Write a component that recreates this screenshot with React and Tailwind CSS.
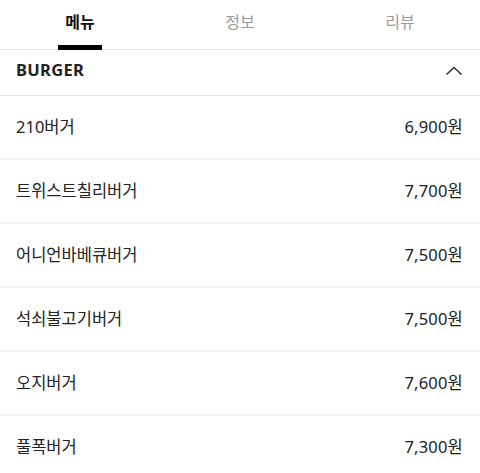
import React from 'react';

const tabs = ['메뉴', '정보', '리뷰'];

const menu = [
  { name: '210버거', price: '6,900원' },
  { name: '트위스트칠리버거', price: '7,700원' },
  { name: '어니언바베큐버거', price: '7,500원' },
  { name: '석쇠불고기버거', price: '7,500원' },
  { name: '오지버거', price: '7,600원' },
  { name: '풀폭버거', price: '7,300원' },
];

export default function App() {
  return (
    <div className="w-[480px] h-[473px] bg-white overflow-hidden font-['Noto_Sans','Noto_Sans_CJK_KR',sans-serif]">
      {/* tabs */}
      <div className="grid grid-cols-3 h-[50px] border-b border-[#e6e6e6]">
        {tabs.map((t, i) => (
          <div key={t} className="relative flex items-center justify-center pb-[6px]">
            <span className={`text-[16px] ${i === 0 ? 'text-[#111] font-semibold' : 'text-[#9a9a9a]'}`}>{t}</span>
            {i === 0 && <div className="absolute bottom-[-1px] left-[58px] w-[44px] h-[5px] bg-black" />}
          </div>
        ))}
      </div>

      {/* category */}
      <div className="flex items-center justify-between h-[46px] pl-4 pr-4 pb-[5px] border-b border-[#e3e3e3]">
        <span className="text-[16.5px] font-bold text-[#222] tracking-[0.3px]">BURGER</span>
        <svg width="18" height="10" viewBox="0 0 18 10" className="mr-[1px] mt-[2px]">
          <path d="M1.5 8.5 L9 1.5 L16.5 8.5" fill="none" stroke="#333" strokeWidth="1.6" />
        </svg>
      </div>

      {menu.map((m) => (
        <div key={m.name} className="flex items-center justify-between h-[64px] px-4 border-b-2 border-[#f2f2f2] text-[16.5px] text-[#222]">
          <span>{m.name}</span>
          <span className="mr-[1px] tracking-[0.2px]">{m.price}</span>
        </div>
      ))}
    </div>
  );
}
